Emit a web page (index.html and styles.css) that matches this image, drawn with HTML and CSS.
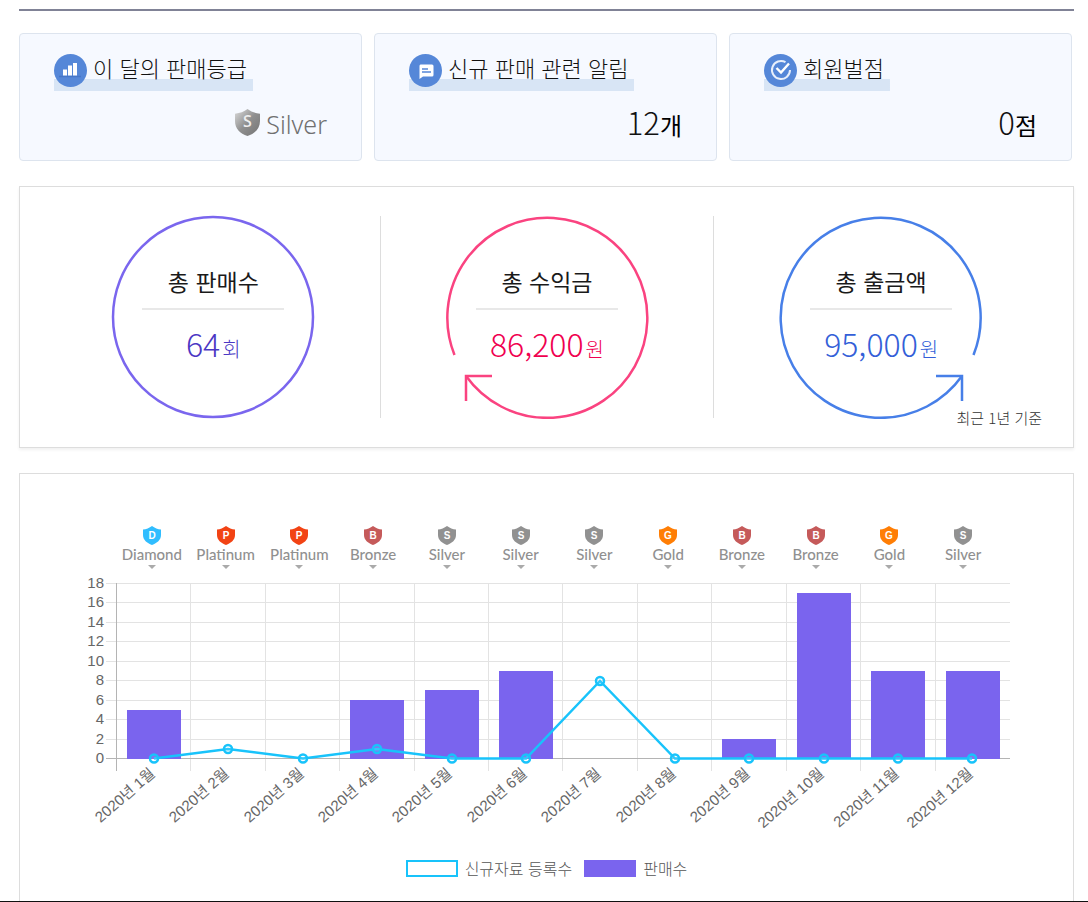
FILE: index.html
```html
<!DOCTYPE html>
<html lang="ko">
<head>
<meta charset="utf-8">
<meta name="viewport" content="width=device-width, initial-scale=1">
<title>판매 현황</title>
<link rel="stylesheet" href="styles.css">
</head>
<body>
<svg class="defs" width="0" height="0" aria-hidden="true">
  <defs>
    <linearGradient id="silver" x1="0" y1="0" x2="1" y2="1">
      <stop offset="0" stop-color="#dcdcdc"/><stop offset="0.5" stop-color="#8f8f8f"/><stop offset="1" stop-color="#747474"/>
    </linearGradient>
    <path id="shield" d="M9 0C6.500 2 3 3.200 0 3.600V9C0 14 4 17 9 19C14 17 18 14 18 9V3.600C15 3.200 11.500 2 9 0Z"/>
  </defs>
</svg>
<main class="page">
  <section class="cards">
    <article class="card">
      <h2 class="card-title">
        <svg class="card-icon" viewBox="0 0 33 33"><circle cx="16.500" cy="16.500" r="16.500" fill="#5587d8"/><path d="M5 22.500H27" stroke="#4676c8" stroke-width="1.500"/><g fill="#fff"><rect x="9" y="15.500" width="4" height="6"/><rect x="14" y="11.500" width="4" height="10"/><rect x="19" y="9" width="4" height="12.500"/></g></svg>
        이 달의 판매등급
      </h2>
      <p class="card-value grade">
        <svg class="grade-icon" viewBox="0 0 25 27"><path d="M12.500 0C9 2.800 5 4 0 4.800V12C0 19.500 5 24.500 12.500 27C20 24.500 25 19.500 25 12V4.800C20 4 16 2.800 12.500 0Z" fill="url(#silver)"/><text class="grade-letter" x="12.500" y="18">S</text></svg>
        <span>Silver</span>
      </p>
    </article>
    <article class="card">
      <h2 class="card-title">
        <svg class="card-icon" viewBox="0 0 33 33"><circle cx="16.500" cy="16.500" r="16.500" fill="#5587d8"/><path d="M11.500 10.500H23Q24.500 10.500 24.500 12V21Q24.500 22.500 23 22.500H14L10.500 25V12Q10.500 10.500 11.500 10.500Z" fill="#fff"/><path d="M13 15H19M13 18H22" stroke="#5587d8" stroke-width="1.300"/></svg>
        신규 판매 관련 알림
      </h2>
      <p class="card-value"><span class="num">12</span><span class="unit">개</span></p>
    </article>
    <article class="card">
      <h2 class="card-title">
        <svg class="card-icon" viewBox="0 0 33 33"><circle cx="16.500" cy="16.500" r="16.500" fill="#5587d8"/><path d="M21.500 8.200A9 9 0 1 0 26 16" fill="none" stroke="#e8effb" stroke-width="2"/><path d="M12.500 14L17 18.500L25 9.500" fill="none" stroke="#fff" stroke-width="2.400"/></svg>
        회원벌점
      </h2>
      <p class="card-value"><span class="num">0</span><span class="unit">점</span></p>
    </article>
  </section>

  <section class="totals">
    <div class="total sales">
      <div class="ring">
        <svg class="ring-art" viewBox="0 0 204 204"><circle cx="102" cy="102" r="100" /></svg>
        <h3>총 판매수</h3>
        <p><span class="amount">64</span><span class="won">회</span></p>
      </div>
    </div>
    <div class="total income">
      <div class="ring">
        <svg class="ring-art" viewBox="0 0 204 204"><path d="M9.500 140A100 100 0 1 1 21 161"/><path d="M47 161H21V186"/></svg>
        <h3>총 수익금</h3>
        <p><span class="amount">86,200</span><span class="won">원</span></p>
      </div>
    </div>
    <div class="total payout">
      <div class="ring">
        <svg class="ring-art" viewBox="0 0 204 204"><path d="M194.500 140A100 100 0 1 0 183 161"/><path d="M157 161H183V186"/></svg>
        <h3>총 출금액</h3>
        <p><span class="amount">95,000</span><span class="won">원</span></p>
      </div>
    </div>
    <p class="note">최근 1년 기준</p>
  </section>

  <section class="report">
    <ol class="ranks">
      <li class="diamond"><svg class="badge" viewBox="0 0 18 19"><use href="#shield"/><text x="9" y="13">D</text></svg>Diamond</li>
      <li class="platinum"><svg class="badge" viewBox="0 0 18 19"><use href="#shield"/><text x="9" y="13">P</text></svg>Platinum</li>
      <li class="platinum"><svg class="badge" viewBox="0 0 18 19"><use href="#shield"/><text x="9" y="13">P</text></svg>Platinum</li>
      <li class="bronze"><svg class="badge" viewBox="0 0 18 19"><use href="#shield"/><text x="9" y="13">B</text></svg>Bronze</li>
      <li class="silver"><svg class="badge" viewBox="0 0 18 19"><use href="#shield"/><text x="9" y="13">S</text></svg>Silver</li>
      <li class="silver"><svg class="badge" viewBox="0 0 18 19"><use href="#shield"/><text x="9" y="13">S</text></svg>Silver</li>
      <li class="silver"><svg class="badge" viewBox="0 0 18 19"><use href="#shield"/><text x="9" y="13">S</text></svg>Silver</li>
      <li class="gold"><svg class="badge" viewBox="0 0 18 19"><use href="#shield"/><text x="9" y="13">G</text></svg>Gold</li>
      <li class="bronze"><svg class="badge" viewBox="0 0 18 19"><use href="#shield"/><text x="9" y="13">B</text></svg>Bronze</li>
      <li class="bronze"><svg class="badge" viewBox="0 0 18 19"><use href="#shield"/><text x="9" y="13">B</text></svg>Bronze</li>
      <li class="gold"><svg class="badge" viewBox="0 0 18 19"><use href="#shield"/><text x="9" y="13">G</text></svg>Gold</li>
      <li class="silver"><svg class="badge" viewBox="0 0 18 19"><use href="#shield"/><text x="9" y="13">S</text></svg>Silver</li>
    </ol>
    <svg class="chart" viewBox="0 0 1053 282" role="img" aria-label="월별 신규자료 등록수와 판매수">
      <path class="grid" d="M86 9.500H990M86 28.500H990M86 48.500H990M86 67.500H990M86 87.500H990M86 106.500H990M86 126.500H990M86 145.500H990M86 165.500H990"/>
      <path class="grid" d="M170.500 9V197M245.500 9V197M319.500 9V197M394.500 9V197M468.500 9V197M542.500 9V197M617.500 9V197M691.500 9V197M766.500 9V197M840.500 9V197M915.500 9V197"/>
      <path class="axis" d="M96.500 9V197M86 184.500H990"/>
      <g class="bars">
        <rect x="107" y="136" width="54" height="49"/>
        <rect x="330" y="126" width="54" height="59"/>
        <rect x="405" y="116" width="54" height="69"/>
        <rect x="479" y="97" width="54" height="88"/>
        <rect x="702" y="165" width="54" height="20"/>
        <rect x="777" y="19" width="54" height="166"/>
        <rect x="851" y="97" width="54" height="88"/>
        <rect x="926" y="97" width="54" height="88"/>
      </g>
      <polyline class="trend" points="134,184.500 208,175 283,184.500 357,175 432,184.500 506,184.500 580,107 655,184.500 729,184.500 804,184.500 878,184.500 952,184.500"/>
      <g class="points">
        <circle cx="134" cy="184.500" r="4"/><circle cx="208" cy="175" r="4"/><circle cx="283" cy="184.500" r="4"/><circle cx="357" cy="175" r="4"/><circle cx="432" cy="184.500" r="4"/><circle cx="506" cy="184.500" r="4"/><circle cx="580" cy="107" r="4"/><circle cx="655" cy="184.500" r="4"/><circle cx="729" cy="184.500" r="4"/><circle cx="804" cy="184.500" r="4"/><circle cx="878" cy="184.500" r="4"/><circle cx="952" cy="184.500" r="4"/>
      </g>
      <g class="labels">
        <text x="84" y="14">18</text><text x="84" y="33">16</text><text x="84" y="53">14</text><text x="84" y="72">12</text><text x="84" y="92">10</text><text x="84" y="111">8</text><text x="84" y="131">6</text><text x="84" y="150">4</text><text x="84" y="170">2</text><text x="84" y="189">0</text>
      </g>
      <g class="labels">
        <text transform="translate(136 201) rotate(-41)">2020년 1월</text>
        <text transform="translate(210 201) rotate(-41)">2020년 2월</text>
        <text transform="translate(285 201) rotate(-41)">2020년 3월</text>
        <text transform="translate(359 201) rotate(-41)">2020년 4월</text>
        <text transform="translate(433 201) rotate(-41)">2020년 5월</text>
        <text transform="translate(508 201) rotate(-41)">2020년 6월</text>
        <text transform="translate(582 201) rotate(-41)">2020년 7월</text>
        <text transform="translate(657 201) rotate(-41)">2020년 8월</text>
        <text transform="translate(731 201) rotate(-41)">2020년 9월</text>
        <text transform="translate(805 201) rotate(-41)">2020년 10월</text>
        <text transform="translate(880 201) rotate(-41)">2020년 11월</text>
        <text transform="translate(954 201) rotate(-41)">2020년 12월</text>
      </g>
    </svg>
    <ul class="legend">
      <li><span class="swatch line"></span>신규자료 등록수</li>
      <li><span class="swatch bar"></span>판매수</li>
    </ul>
  </section>
</main>
</body>
</html>
```
FILE: styles.css
```css
* { box-sizing: border-box; }
body {
  margin: 0;
  background: #fff;
  color: #111;
  font-family: "Noto Sans CJK KR", sans-serif;
  font-weight: 300;
}
h2, h3, p, ol, ul { margin: 0; padding: 0; font-weight: inherit; }
ol, ul { list-style: none; }
.defs { position: absolute; }
.page { padding: 9px 14px 0 19px; border-bottom: 1px solid #111; }

.cards {
  display: grid;
  grid-template-columns: repeat(3, 1fr);
  gap: 12px;
  padding: 22px 2px 0 0;
  border-top: 2px solid #808296;
}
.card {
  display: flex;
  flex-direction: column;
  align-items: flex-start;
  min-height: 128px;
  padding: 20px 34px 12px;
  background: #f6f9ff;
  border: 1px solid #dde4ee;
  border-radius: 4px;
}
.card-title {
  display: flex;
  gap: 6px;
  height: 37px;
  padding-right: 6px;
  font-size: 22px;
  line-height: 27px;
  background: linear-gradient(#d8e5f5, #d8e5f5) bottom / 100% 12px no-repeat;
}
.card-icon { width: 33px; height: 33px; }
.card-value {
  display: flex;
  align-items: baseline;
  align-self: flex-end;
  margin-top: 11px;
  line-height: 40px;
}
.num { font-size: 31px; }
.unit { font-size: 24px; font-weight: 400; color: #000; }
.grade { align-items: center; gap: 6px; font-size: 25px; line-height: 44px; color: #707070; }
.grade span { font-family: "Noto Sans", sans-serif; font-weight: 300; }
.grade-icon { width: 25px; height: 27px; margin-bottom: 4px; }
.grade-letter { fill: #eee; font: 600 16px "Open Sans", sans-serif; text-anchor: middle; }

.totals {
  position: relative;
  display: grid;
  grid-template-columns: repeat(3, 1fr);
  margin-top: 25px;
  padding: 29px 25px 29px 27px;
  border: 1px solid #ddd;
  box-shadow: 0 2px 3px rgba(0, 0, 0, 0.06);
}
.total { display: flex; justify-content: center; }
.total:not(:last-of-type) { border-right: 1px solid #ddd; }
.ring {
  display: flex;
  flex-direction: column;
  align-items: center;
  position: relative;
  width: 204px;
  height: 202px;
  padding-top: 45px;
}
.ring-art { position: absolute; inset: -1px 0 0 0; width: 204px; height: 204px; fill: none; stroke: currentColor; stroke-width: 2.5px; }
.sales { color: #7a66ee; }
.income { color: #fa4380; }
.payout { color: #477fe8; }
.ring h3 {
  width: 142px;
  height: 49px;
  border-bottom: 2px solid #e8e8e8;
  color: #1a1a1a;
  font-size: 23px;
  font-weight: 400;
  line-height: 40px;
  text-align: center;
}
.ring p { display: flex; align-items: baseline; gap: 2px; line-height: 66px; }
.amount { font-size: 32px; }
.won { font-size: 20px; }
.sales p { color: #4b37c4; }
.income p { color: #f0004f; }
.payout p { color: #345fd8; }
.note { position: absolute; right: 31px; bottom: 18px; font-size: 15px; line-height: 22px; color: #333; }

.report { margin-top: 25px; padding: 52px 0 20px; border: 1px solid #ddd; border-bottom: 0; }
.ranks {
  display: grid;
  grid-template-columns: repeat(12, 1fr);
  padding: 0 73px 0 95px;
}
.ranks li {
  display: flex;
  flex-direction: column;
  align-items: center;
  color: #909090;
  font: 500 15px/18px Lato, sans-serif;
}
.ranks li::after {
  content: "";
  margin-top: 2px;
  border: 4px solid transparent;
  border-top-color: #aaa;
  border-bottom: 0;
}
.badge { width: 18px; height: 19px; }
.badge text { fill: #fff; font: 700 10px "Liberation Sans", sans-serif; text-anchor: middle; }
.diamond .badge { fill: #30bdff; }
.platinum .badge { fill: #f24314; }
.bronze .badge { fill: #c55a5a; }
.silver .badge { fill: #919191; }
.gold .badge { fill: #ff7e05; }

.chart { display: block; width: 100%; margin-top: 5px; }
.grid { stroke: #e3e3e3; }
.axis { stroke: #b4b4b4; fill: none; }
.bars { fill: #7a64ee; }
.trend { fill: none; stroke: #18c3fb; stroke-width: 2.5px; }
.points { fill: rgba(255, 255, 255, 0.1); stroke: #18c3fb; stroke-width: 2.5px; }
.labels { fill: #666; font: 400 15px "Liberation Sans", "Noto Sans CJK KR", sans-serif; text-anchor: end; }

.legend { display: flex; justify-content: center; gap: 12px; padding-bottom: 1px; color: #555; font-size: 16px; line-height: 24px; }
.legend li { display: flex; align-items: center; gap: 7px; }
.swatch { width: 52px; height: 17px; }
.swatch.line { border: 2px solid #18c3fb; }
.swatch.bar { background: #7a64ee; }
```
